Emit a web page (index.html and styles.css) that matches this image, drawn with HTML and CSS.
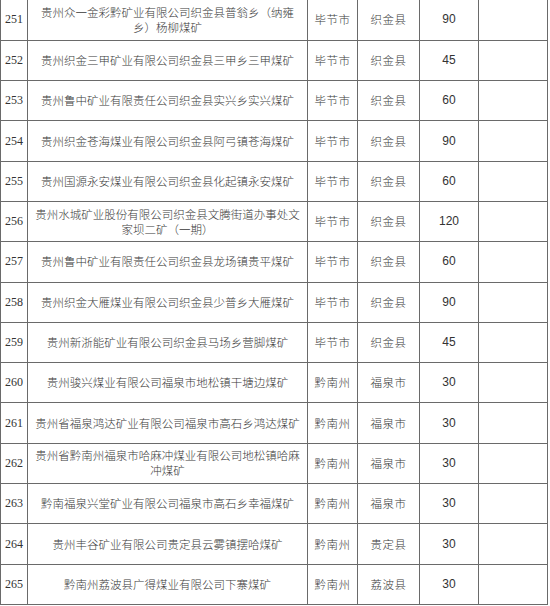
FILE: index.html
```html
<!DOCTYPE html>
<html lang="zh">
<head>
<meta charset="utf-8">
<link rel="stylesheet" href="styles.css">
</head>
<body>
<table class="list">
<colgroup>
<col class="c-no"><col class="c-name"><col class="c-city"><col class="c-county"><col class="c-cap"><col class="c-note">
</colgroup>
<tbody>
<tr><td class="no">251</td><td class="name">贵州众一金彩黔矿业有限公司织金县普翁乡（纳雍乡）杨柳煤矿</td><td class="cn">毕节市</td><td class="cn">织金县</td><td class="cap">90</td><td></td></tr>
<tr><td class="no">252</td><td class="name">贵州织金三甲矿业有限公司织金县三甲乡三甲煤矿</td><td class="cn">毕节市</td><td class="cn">织金县</td><td class="cap">45</td><td></td></tr>
<tr><td class="no">253</td><td class="name">贵州鲁中矿业有限责任公司织金县实兴乡实兴煤矿</td><td class="cn">毕节市</td><td class="cn">织金县</td><td class="cap">60</td><td></td></tr>
<tr><td class="no">254</td><td class="name">贵州织金苍海煤业有限公司织金县阿弓镇苍海煤矿</td><td class="cn">毕节市</td><td class="cn">织金县</td><td class="cap">90</td><td></td></tr>
<tr><td class="no">255</td><td class="name">贵州国源永安煤业有限公司织金县化起镇永安煤矿</td><td class="cn">毕节市</td><td class="cn">织金县</td><td class="cap">60</td><td></td></tr>
<tr><td class="no">256</td><td class="name">贵州水城矿业股份有限公司织金县文腾街道办事处文家坝二矿（一期）</td><td class="cn">毕节市</td><td class="cn">织金县</td><td class="cap">120</td><td></td></tr>
<tr><td class="no">257</td><td class="name">贵州鲁中矿业有限责任公司织金县龙场镇贵平煤矿</td><td class="cn">毕节市</td><td class="cn">织金县</td><td class="cap">60</td><td></td></tr>
<tr><td class="no">258</td><td class="name">贵州织金大雁煤业有限公司织金县少普乡大雁煤矿</td><td class="cn">毕节市</td><td class="cn">织金县</td><td class="cap">90</td><td></td></tr>
<tr><td class="no">259</td><td class="name">贵州新浙能矿业有限公司织金县马场乡营脚煤矿</td><td class="cn">毕节市</td><td class="cn">织金县</td><td class="cap">45</td><td></td></tr>
<tr><td class="no">260</td><td class="name">贵州骏兴煤业有限公司福泉市地松镇干塘边煤矿</td><td class="cn">黔南州</td><td class="cn">福泉市</td><td class="cap">30</td><td></td></tr>
<tr><td class="no">261</td><td class="name">贵州省福泉鸿达矿业有限公司福泉市高石乡鸿达煤矿</td><td class="cn">黔南州</td><td class="cn">福泉市</td><td class="cap">30</td><td></td></tr>
<tr><td class="no">262</td><td class="name">贵州省黔南州福泉市哈麻冲煤业有限公司地松镇哈麻冲煤矿</td><td class="cn">黔南州</td><td class="cn">福泉市</td><td class="cap">30</td><td></td></tr>
<tr><td class="no">263</td><td class="name">黔南福泉兴堂矿业有限公司福泉市高石乡幸福煤矿</td><td class="cn">黔南州</td><td class="cn">福泉市</td><td class="cap">30</td><td></td></tr>
<tr><td class="no">264</td><td class="name">贵州丰谷矿业有限公司贵定县云雾镇摆哈煤矿</td><td class="cn">黔南州</td><td class="cn">贵定县</td><td class="cap">30</td><td></td></tr>
<tr><td class="no">265</td><td class="name">黔南州荔波县广得煤业有限公司下寨煤矿</td><td class="cn">黔南州</td><td class="cn">荔波县</td><td class="cap">30</td><td></td></tr>
</tbody>
</table>
</body>
</html>
```
FILE: styles.css
```css
html, body {
  margin: 0;
  padding: 0;
  background: #ffffff;
}

.list {
  border-collapse: collapse;
  table-layout: fixed;
  width: 547px;
  font-family: "Noto Sans CJK SC", "Noto Sans", sans-serif;
  font-weight: 300;
  color: #3a3a3a;
  text-spacing-trim: space-all;
}

.c-no { width: 27px; }
.c-name { width: 280px; }
.c-city { width: 50px; }
.c-county { width: 62px; }
.c-cap { width: 59px; }
.c-note { width: 69px; }

.list tr {
  height: 40.3px;
}

.list td {
  border: 1px solid #6a6a6a;
  padding: 0 4px;
  text-align: center;
  vertical-align: middle;
  font-size: 11.5px;
  line-height: 15px;
  overflow: hidden;
}

.list tr:first-child td {
  border-top: none;
}

.list td.no {
  padding: 0;
  font-family: "Liberation Serif", serif;
  font-weight: 400;
  font-size: 12px;
  color: #333333;
}

.list td.name {
  padding: 0 3px;
  text-spacing-trim: space-all;
}

.list td.cn {
  padding: 0;
  letter-spacing: 0.5px;
}

.list td.cap {
  padding: 0;
  font-family: "Liberation Sans", Arial, sans-serif;
  font-weight: 400;
  font-size: 12px;
  color: #333333;
}
```
